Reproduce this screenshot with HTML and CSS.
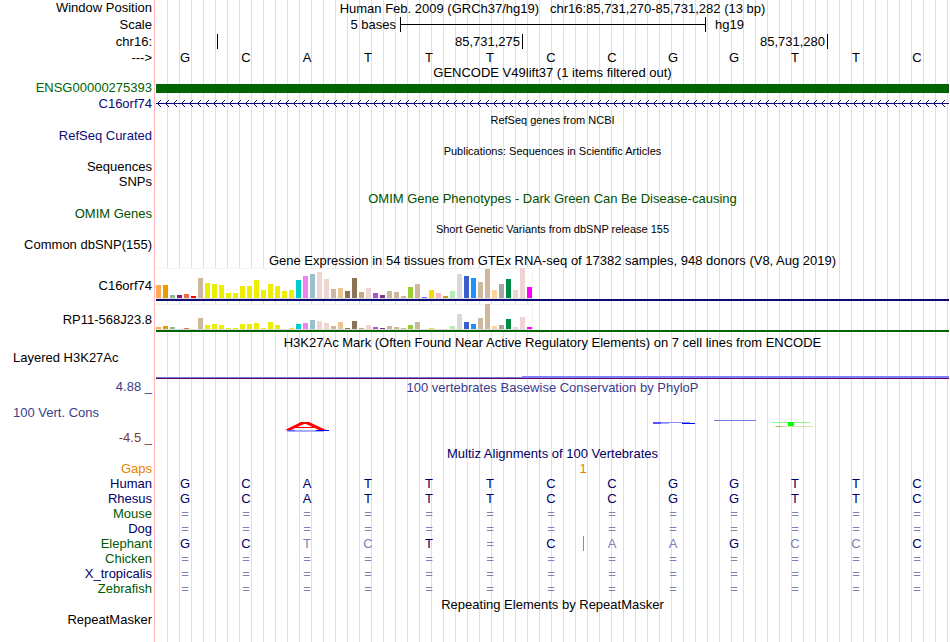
FILE: index.html
```
<!DOCTYPE html>
<html lang="en">
<head>
  <meta charset="UTF-8">
  <meta name="viewport" content="width=device-width, initial-scale=1">
  <title>Human chr16:85,731,270-85,731,282 - Genome Browser</title>
  <link rel="stylesheet" href="styles.css">
</head>
<body>
  <main class="tracks">

    <!-- Position and ruler -->
    <div class="row title-row">
      <div class="label">Window Position</div>
      <h1 class="title">Human Feb. 2009 (GRCh37/hg19) &nbsp; chr16:85,731,270-85,731,282 (13 bp)</h1>
    </div>
    <div class="row tall">
      <div class="label">Scale</div>
      <div class="bases ruler">
        <span class="scale-text">5 bases</span>
        <span class="scale-bar"></span>
        <span class="assembly">hg19</span>
      </div>
    </div>
    <div class="row tall">
      <div class="label">chr16:</div>
      <div class="bases ruler">
        <span class="tick first"></span>
        <span class="tick">85,731,275</span>
        <span class="tick">85,731,280</span>
      </div>
    </div>
    <div class="row">
      <div class="label">---&gt;</div>
      <div class="bases sequence">
        <span>G</span><span>C</span><span>A</span><span>T</span><span>T</span><span>T</span><span>C</span><span>C</span><span>G</span><span>G</span><span>T</span><span>T</span><span>C</span>
      </div>
    </div>

    <!-- Genes -->
    <div class="row"><h2 class="title">GENCODE V49lift37 (1 items filtered out)</h2></div>
    <div class="row">
      <div class="label green">ENSG00000275393</div>
      <div class="exon"></div>
    </div>
    <div class="row tall">
      <div class="label navy">C16orf74</div>
      <svg class="intron" width="100%" height="7">
        <defs>
          <pattern id="arrows" x="1" width="8" height="7" patternUnits="userSpaceOnUse">
            <path d="M0 3h1v1h-1zM1 2h1v1h-1zM2 1h1v1h-1zM3 0h1v1h-1zM1 4h1v1h-1zM2 5h1v1h-1zM3 6h1v1h-1z"/>
          </pattern>
        </defs>
        <rect width="100%" height="7" fill="url(#arrows)"/>
        <rect y="3" width="100%" height="1"/>
      </svg>
    </div>
    <div class="row title-row"><h2 class="title small">RefSeq genes from NCBI</h2></div>
    <div class="row"><div class="label navy">RefSeq Curated</div></div>
    <div class="row title-row"><h2 class="title small">Publications: Sequences in Scientific Articles</h2></div>
    <div class="row"><div class="label">Sequences</div></div>
    <div class="row title-row"><div class="label">SNPs</div></div>
    <div class="row title-row"><h2 class="title omim">OMIM Gene Phenotypes - Dark Green Can Be Disease-causing</h2></div>
    <div class="row"><div class="label omim">OMIM Genes</div></div>
    <div class="row title-row"><h2 class="title small">Short Genetic Variants from dbSNP release 155</h2></div>
    <div class="row"><div class="label">Common dbSNP(155)</div></div>

    <!-- GTEx, bars are filled in by script.js -->
    <div class="row title-row"><h2 class="title">Gene Expression in 54 tissues from GTEx RNA-seq of 17382 samples, 948 donors (V8, Aug 2019)</h2></div>
    <div class="row gtex coding">
      <div class="label">C16orf74</div>
      <div class="plot"><div class="bars" id="gtexC16orf74"></div></div>
    </div>
    <div class="row gtex noncoding">
      <div class="label">RP11-568J23.8</div>
      <div class="plot"><div class="bars" id="gtexRP11"></div></div>
    </div>

    <!-- Regulation -->
    <div class="row h3k27ac-title"><h2 class="title">H3K27Ac Mark (Often Found Near Active Regulatory Elements) on 7 cell lines from ENCODE</h2></div>
    <div class="row h3k27ac">
      <div class="label left">Layered H3K27Ac</div>
      <div class="bases signal"><span class="low"></span><span class="high"></span></div>
    </div>

    <!-- Conservation -->
    <div class="row title-row">
      <div class="label phylop">4.88 _</div>
      <h2 class="title phylop">100 vertebrates Basewise Conservation by PhyloP</h2>
    </div>
    <div class="row conservation">
      <div class="cons-labels">
        <div class="label left phylop">100 Vert. Cons</div>
        <div class="label negative">-4.5 _</div>
      </div>
      <svg class="logo" width="100%" height="50" viewBox="0 0 793 50" preserveAspectRatio="none">
        <rect x="131" y="34" width="37" height="2" fill="#aaaaff"/>
        <rect x="131" y="34" width="8" height="1" fill="#5555ff"/>
        <rect x="160" y="34" width="13" height="1" fill="#0000ff"/>
        <path d="M129 34 L145 26 H153 L170 34 H163 L150 28 H148 L135 34 Z" fill="#ff0000"/>
        <rect x="140" y="31" width="18" height="1" fill="#ff0000"/>
        <rect x="497" y="26" width="37" height="1" fill="#8888ff"/>
        <rect x="497" y="26" width="8" height="2" fill="#5555ff"/>
        <rect x="505" y="27" width="8" height="1" fill="#aaaaff"/>
        <rect x="526" y="27" width="13" height="1" fill="#0000ff"/>
        <rect x="558" y="24" width="42" height="1" fill="#7777e6"/>
        <rect x="616" y="26" width="38" height="1" fill="#88ff88"/>
        <rect x="619" y="30" width="38" height="1" fill="#ddddaa"/>
        <rect x="620" y="30" width="6" height="1" fill="#b4b450"/>
        <rect x="632" y="26" width="6" height="4" fill="#00ff00"/>
      </svg>
    </div>

    <!-- Multiz -->
    <div class="row title-row"><h2 class="title multiz">Multiz Alignments of 100 Vertebrates</h2></div>
    <table class="alignment">
      <tr class="gaps"><th>Gaps</th><td colspan="6"></td><td colspan="2">1</td><td colspan="5"></td></tr>
      <tr><th>Human</th><td>G</td><td>C</td><td>A</td><td>T</td><td>T</td><td>T</td><td>C</td><td>C</td><td>G</td><td>G</td><td>T</td><td>T</td><td>C</td></tr>
      <tr><th>Rhesus</th><td>G</td><td>C</td><td>A</td><td>T</td><td>T</td><td>T</td><td>C</td><td>C</td><td>G</td><td>G</td><td>T</td><td>T</td><td>C</td></tr>
      <tr class="alt unaligned"><th>Mouse</th><td>=</td><td>=</td><td>=</td><td>=</td><td>=</td><td>=</td><td>=</td><td>=</td><td>=</td><td>=</td><td>=</td><td>=</td><td>=</td></tr>
      <tr class="unaligned"><th>Dog</th><td>=</td><td>=</td><td>=</td><td>=</td><td>=</td><td>=</td><td>=</td><td>=</td><td>=</td><td>=</td><td>=</td><td>=</td><td>=</td></tr>
      <tr class="alt"><th>Elephant</th><td>G</td><td>C</td><td class="diff">T</td><td class="diff">C</td><td>T</td><td class="diff">=</td><td>C</td><td class="diff insert">A</td><td class="diff">A</td><td>G</td><td class="diff">C</td><td class="diff">C</td><td>C</td></tr>
      <tr class="alt unaligned"><th>Chicken</th><td>=</td><td>=</td><td>=</td><td>=</td><td>=</td><td>=</td><td>=</td><td>=</td><td>=</td><td>=</td><td>=</td><td>=</td><td>=</td></tr>
      <tr class="unaligned"><th>X_tropicalis</th><td>=</td><td>=</td><td>=</td><td>=</td><td>=</td><td>=</td><td>=</td><td>=</td><td>=</td><td>=</td><td>=</td><td>=</td><td>=</td></tr>
      <tr class="alt unaligned"><th>Zebrafish</th><td>=</td><td>=</td><td>=</td><td>=</td><td>=</td><td>=</td><td>=</td><td>=</td><td>=</td><td>=</td><td>=</td><td>=</td><td>=</td></tr>
    </table>

    <!-- Repeats -->
    <div class="row title-row"><h2 class="title">Repeating Elements by RepeatMasker</h2></div>
    <div class="row"><div class="label">RepeatMasker</div></div>
  </main>

  <script src="script.js"></script>
</body>
</html>
```
FILE: styles.css
```
:root {
  --label-width: 156px;
  --navy: #0c0c78;
  --green: #006400;
  --phylop: #3c3c8c;
}

body {
  margin: 0;
  background: #fff;
  color: #000;
  font-family: "Liberation Sans", Arial, Helvetica, sans-serif;
  font-size: 13px;
  line-height: 15px;
}

/* guide lines every 12px, red edge beside the labels */
.tracks {
  box-sizing: border-box;
  min-height: 100vh;
  margin-right: 1px;
  background:
    linear-gradient(#ffb4b4, #ffb4b4) 154px 0 / 1px 100% no-repeat,
    repeating-linear-gradient(to right, transparent 0 11px, #dcdcf5 11px 12px) var(--label-width) 0 no-repeat;
}

.row {
  display: grid;
  grid-template-columns: var(--label-width) 1fr;
  align-items: center;
  height: 15px;
}

.row.tall {
  height: 17px;
}

.row.title-row {
  height: 16px;
}

.label {
  padding: 0 4px 2px 0;
  text-align: right;
  white-space: nowrap;
}

.tall .label {
  padding-bottom: 0;
}

.label.left {
  padding-left: 13px;
  text-align: left;
}

.title {
  grid-column: 2;
  margin: 0;
  font-size: 13px;
  font-weight: normal;
  text-align: center;
  white-space: nowrap;
}

.title.small {
  font-size: 11px;
}

.green { color: var(--green); }
.navy { color: var(--navy); }
.omim { color: #005000; }
.phylop { color: var(--phylop); }
.negative { color: #783c3c; }
.multiz { color: #000064; }

/* one column for each base in the window */
.bases {
  display: grid;
  grid-template-columns: repeat(13, 1fr);
  text-align: center;
}

.sequence {
  padding-bottom: 2px;
}

.sequence span {
  padding-right: 3px;
}

.ruler {
  text-align: right;
}

.scale-text {
  grid-column: 1 / 5;
  padding-right: 4px;
}

.scale-bar {
  grid-column: 5 / 10;
  margin-right: -1px;
  border: solid #000;
  border-width: 0 1px;
  background: linear-gradient(#000, #000) center / 100% 1px no-repeat;
}

.assembly {
  padding-left: 10px;
  text-align: left;
}

.tick {
  grid-column: span 5;
  margin-right: -1px;
  padding-right: 2px;
  border-right: 1px solid #000;
}

.tick.first {
  grid-column: span 1;
}

.exon {
  height: 9px;
  background: var(--green);
}

.intron {
  fill: var(--navy);
}

/* GTEx */
.gtex {
  height: 33px;
}

.gtex .label {
  padding-top: 4px;
}

.plot {
  align-self: end;
  border-bottom: 2px solid var(--navy);
}

.noncoding {
  height: 31px;
}

.noncoding .label {
  padding-top: 8px;
}

.noncoding .plot {
  border-color: var(--green);
}

.bars {
  box-sizing: border-box;
  display: flex;
  align-items: flex-end;
  gap: 2px;
  width: 377px;
  height: 31px;
  background: #fff;
  border-bottom: 1px solid #ddd;
  box-shadow: inset 0 1px #f3f3f3, inset -1px 0 #f3f3f3;
}

.noncoding .bars {
  height: 26px;
}

.bar {
  width: 5px;
}

.h3k27ac-title {
  height: 18px;
  align-items: end;
}

.h3k27ac {
  height: 29px;
  align-items: start;
}

.signal {
  align-self: end;
  align-items: end;
}

.low {
  grid-column: 1 / 7;
  height: 1px;
  border-bottom: 1px solid #640064;
  background: #7878d2;
}

.high {
  grid-column: 7 / 14;
  height: 2px;
  border-bottom: 1px solid #640064;
  background: #8080ff;
}

.conservation {
  height: 50px;
}

.cons-labels {
  display: flex;
  flex-direction: column;
  align-self: start;
  gap: 8px;
  padding-top: 10px;
}

/* Multiz */
.alignment {
  width: 100%;
  table-layout: fixed;
  border-collapse: collapse;
  color: #000064;
}

.alignment th {
  width: 152px;
  padding: 0 4px 0 0;
  font-weight: normal;
  text-align: right;
}

.alignment td {
  height: 15px;
  padding: 0 3px 0 0;
  text-align: center;
}

.alignment .gaps {
  color: #e68200;
}

.alignment .gaps td {
  padding: 0;
}

.alignment .alt th {
  color: #005a00;
}

.alignment .unaligned td,
.alignment .diff {
  color: #8080b4;
}

.alignment .insert {
  box-shadow: inset 1px 0 #dc8200;
}
```
FILE: script.js
```
const tissueColors = [
  "#ffaa56", "#ee9a00", "#8fbc8f", "#8b1c62", "#ee6a50", "#ff0000",
  "#cdb79e",
  "#eeee00", "#eeee00", "#eeee00", "#eeee00", "#eeee00", "#eeee00", "#eeee00",
  "#eeee00", "#eeee00", "#eeee00", "#eeee00", "#eeee00", "#eeee00",
  "#00cdcd", "#ee82ee", "#9ac0cd", "#eed5d2", "#eed5d2", "#cdb79e", "#eec591",
  "#8b7355", "#8b7355", "#cdaa7d", "#eed5d2", "#b452cd", "#7a378b", "#cdb79e",
  "#cdb79e", "#cdb79e", "#9acd32", "#cdb79e", "#7a67ee", "#ffd700", "#ffb6c1",
  "#cd9b1d", "#b4eeb4", "#d9d9d9", "#3a5fcd", "#1e90ff", "#cdb79e", "#cdb79e",
  "#ffd39b", "#a6a6a6", "#008b45", "#eed5d2", "#eed5d2", "#ff00ff"
];

const expression = {
  gtexC16orf74: [
    13, 13, 3, 3, 4, 2, 20, 15, 14, 13, 5, 5, 12, 12, 18, 8, 14, 12,
    7, 8, 18, 22, 24, 26, 19, 9, 10, 7, 20, 6, 10, 5, 3, 7, 6, 2,
    11, 14, 1, 8, 5, 2, 7, 24, 22, 20, 16, 29, 8, 14, 19, 8, 30, 11
  ],
  gtexRP11: [
    2, 3, 2, 0, 1, 0, 11, 4, 5, 4, 1, 1, 5, 5, 6, 1, 7, 4,
    0, 1, 5, 6, 9, 8, 6, 3, 7, 1, 8, 1, 4, 2, 1, 3, 2, 1,
    4, 7, 0, 1, 0, 0, 3, 15, 7, 5, 11, 25, 3, 4, 10, 2, 12, 2
  ]
};

function drawBars(id) {
  const plot = document.getElementById(id);
  expression[id].forEach((value, i) => {
    const bar = document.createElement("div");
    bar.className = "bar";
    bar.style.height = value + "px";
    bar.style.background = tissueColors[i];
    plot.appendChild(bar);
  });
}

Object.keys(expression).forEach(drawBars);
```
